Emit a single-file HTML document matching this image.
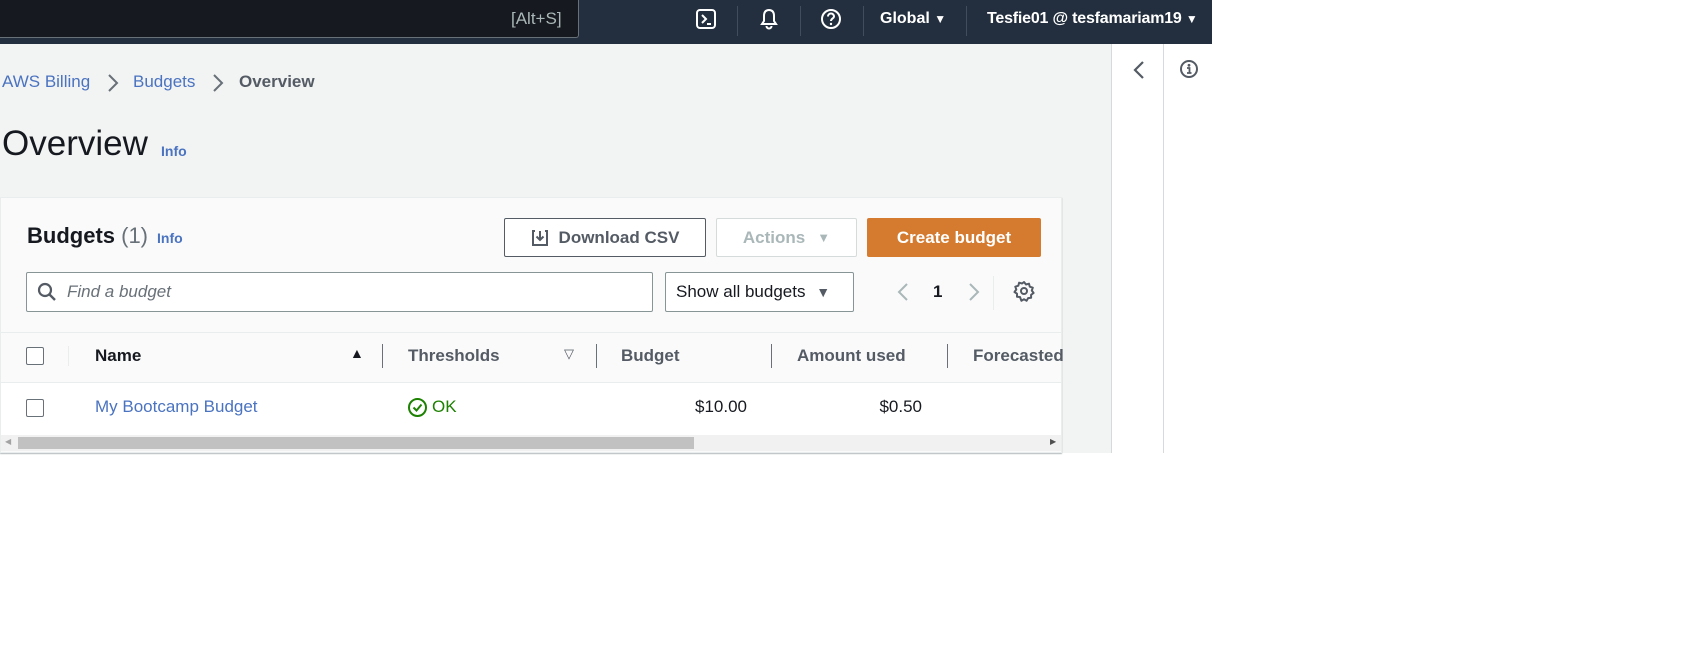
<!DOCTYPE html>
<html><head><meta charset="utf-8"><style>
*{box-sizing:border-box;margin:0;padding:0}
body{width:1704px;height:648px;background:#fff;font-family:"Liberation Sans",sans-serif;position:relative;overflow:hidden;color:#16191f}
.a{position:absolute;white-space:nowrap}
.bar{left:0;top:0;width:1212px;height:44px;background:#232f3e}
.srch{left:0;top:0;width:579px;height:38px;background:#16191f;border:1px solid #687078;border-left:none;border-top:none;border-radius:0 0 3px 0}
.main{left:0;top:44px;width:1112px;height:409px;background:#f2f3f3}
.vl{width:1px;background:#d5dbdb}
.lnk{color:#4a73c0}
.card{left:0;top:197px;width:1062px;height:256px;background:#fafafa;border:1px solid #eaeded;box-shadow:0 1px 1px rgba(0,28,36,.3)}
.btn{height:39px;border:1px solid #545b64;border-radius:2px;font-weight:bold;font-size:17px;display:flex;align-items:center;justify-content:center;background:#fff;color:#545b64}
.cb{width:18px;height:18px;border:1.5px solid #687078;border-radius:2px;background:#fff}
.th{font-weight:bold;font-size:17px;color:#545b64}
.sep{width:1px;height:24px;background:#687078}
</style></head><body>
<div class="a bar"></div>
<div class="a srch"></div>
<div class="a" style="left:511px;top:9px;font-size:17px;color:#aab7b8">[Alt+S]</div>
<svg class="a" style="left:695px;top:8px" width="22" height="22" viewBox="0 0 22 22"><rect x="2" y="2" width="18" height="18" rx="3" fill="none" stroke="#fff" stroke-width="2"/><path d="M7 7l4 4-4 4M12 16h4" fill="none" stroke="#fff" stroke-width="2"/></svg>
<div class="a" style="left:737px;top:6px;width:1px;height:30px;background:#414d5c"></div>
<svg class="a" style="left:758px;top:7px" width="22" height="24" viewBox="0 0 22 24"><path d="M11 3c-4 0-5 3-5 6v5l-2 3h14l-2-3V9c0-3-1-6-5-6zM8.5 19a2.5 2.5 0 005 0" fill="none" stroke="#fff" stroke-width="2"/></svg>
<div class="a" style="left:800px;top:6px;width:1px;height:30px;background:#414d5c"></div>
<svg class="a" style="left:820px;top:8px" width="22" height="22" viewBox="0 0 22 22"><circle cx="11" cy="11" r="9" fill="none" stroke="#fff" stroke-width="2"/><path d="M8 8.5a3 3 0 116 0c0 2-3 2-3 4.5" fill="none" stroke="#fff" stroke-width="2"/><circle cx="11" cy="16" r="1.2" fill="#fff"/></svg>
<div class="a" style="left:863px;top:6px;width:1px;height:30px;background:#414d5c"></div>
<div class="a" style="left:880px;top:10px;font-size:16px;font-weight:bold;color:#fff">Global <span style="font-size:12px">▼</span></div>
<div class="a" style="left:966px;top:6px;width:1px;height:30px;background:#414d5c"></div>
<div class="a" style="left:987px;top:10px;font-size:16px;font-weight:bold;color:#fff;letter-spacing:-0.2px">Tesfie01 @ tesfamariam19 <span style="font-size:12px">▼</span></div>

<div class="a main"></div>
<div class="a vl" style="left:1111px;top:44px;height:409px"></div>
<div class="a vl" style="left:1163px;top:44px;height:409px"></div>
<svg class="a" style="left:1131px;top:59px" width="16" height="22" viewBox="0 0 16 22"><path d="M12 3L4 11l8 8" fill="none" stroke="#545b64" stroke-width="2.2"/></svg>
<svg class="a" style="left:1179px;top:59px" width="20" height="20" viewBox="0 0 20 20"><circle cx="10" cy="10" r="8" fill="none" stroke="#545b64" stroke-width="2"/><circle cx="10" cy="6.3" r="1.4" fill="#545b64"/><path d="M8 9h2.5v5M8 14h4.5" fill="none" stroke="#545b64" stroke-width="1.8"/></svg>

<div class="a lnk" style="left:2px;top:72px;font-size:17px">AWS Billing</div>
<svg class="a" style="left:106px;top:73px" width="14" height="20" viewBox="0 0 14 20"><path d="M3 2l8 8-8 8" fill="none" stroke="#687078" stroke-width="2"/></svg>
<div class="a lnk" style="left:133px;top:72px;font-size:17px">Budgets</div>
<svg class="a" style="left:211px;top:73px" width="14" height="20" viewBox="0 0 14 20"><path d="M3 2l8 8-8 8" fill="none" stroke="#687078" stroke-width="2"/></svg>
<div class="a" style="left:239px;top:72px;font-size:17px;font-weight:bold;color:#545b64">Overview</div>
<div class="a" style="left:2px;top:124px;font-size:35px;color:#16191f">Overview</div>
<div class="a lnk" style="left:161px;top:143px;font-size:14px;font-weight:bold">Info</div>

<div class="a card"></div>
<div class="a" style="left:1px;top:382px;width:1060px;height:53px;background:#fff;border-top:1px solid #eaeded"></div>
<div class="a" style="left:1px;top:332px;width:1060px;height:1px;background:#eaeded"></div>
<div class="a" style="left:27px;top:223px;font-size:22px;font-weight:bold">Budgets <span style="font-weight:normal;color:#687078">(1)</span></div>
<div class="a lnk" style="left:157px;top:230px;font-size:14px;font-weight:bold">Info</div>
<div class="a btn" style="left:504px;top:218px;width:202px"><svg width="18" height="18" viewBox="0 0 18 18" style="margin-right:10px"><path d="M4 2H2v14h14V2h-2M9 2v9M5.5 7.5L9 11l3.5-3.5" fill="none" stroke="#545b64" stroke-width="2"/></svg>Download CSV</div>
<div class="a btn" style="left:716px;top:218px;width:141px;border-color:#d5dbdb;color:#aab7b8">Actions<span style="font-size:13px;margin-left:12px">▼</span></div>
<div class="a btn" style="left:867px;top:218px;width:174px;background:#d47b30;border-color:#d47b30;color:#fff">Create budget</div>
<div class="a" style="left:26px;top:272px;width:627px;height:40px;border:1px solid #879596;border-radius:2px;background:#fff"></div>
<svg class="a" style="left:37px;top:282px" width="20" height="20" viewBox="0 0 20 20"><circle cx="8" cy="8" r="6" fill="none" stroke="#545b64" stroke-width="2.2"/><path d="M12.5 12.5L18 18" stroke="#545b64" stroke-width="2.4"/></svg>
<div class="a" style="left:67px;top:282px;font-size:17px;font-style:italic;color:#687078">Find a budget</div>
<div class="a" style="left:665px;top:272px;width:189px;height:40px;border:1px solid #879596;border-radius:2px;background:#fff;font-size:17px;padding:9px 0 0 10px">Show all budgets <span style="font-size:14px;color:#545b64;margin-left:6px">▼</span></div>
<svg class="a" style="left:895px;top:281px" width="16" height="22" viewBox="0 0 16 22"><path d="M12 3L4 11l8 8" fill="none" stroke="#aab7b8" stroke-width="2"/></svg>
<div class="a" style="left:933px;top:282px;font-size:17px;font-weight:bold">1</div>
<svg class="a" style="left:966px;top:281px" width="16" height="22" viewBox="0 0 16 22"><path d="M4 3l8 8-8 8" fill="none" stroke="#aab7b8" stroke-width="2"/></svg>
<div class="a" style="left:993px;top:276px;width:1px;height:34px;background:#eaeded"></div>
<svg class="a" style="left:1013px;top:280px" width="22" height="22" viewBox="0 0 22 22"><path d="M11 2l2 2.5 3-.8.8 3 3 1-1 2.8 1.8 2.5-2.5 1.8v3l-3 .3-1.5 2.7-2.6-1.5-2.6 1.5L7 17l-3-.3v-3L1.5 12 3.3 9.5 2.3 6.7l3-1 .8-3 3 .8z" fill="none" stroke="#545b64" stroke-width="2" stroke-linejoin="round"/><circle cx="11" cy="11" r="3" fill="none" stroke="#545b64" stroke-width="2"/></svg>

<div class="a cb" style="left:26px;top:347px"></div>
<div class="a" style="left:68px;top:346px;width:1px;height:20px;background:#eaeded"></div>
<div class="a th" style="left:95px;top:346px;color:#16191f">Name</div>
<div class="a" style="left:350px;top:345px;font-size:14px">▲</div>
<div class="a sep" style="left:382px;top:344px"></div>
<div class="a th" style="left:408px;top:346px">Thresholds</div>
<div class="a" style="left:564px;top:346px;font-size:13px;color:#545b64">▽</div>
<div class="a sep" style="left:596px;top:344px"></div>
<div class="a th" style="left:621px;top:346px">Budget</div>
<div class="a sep" style="left:771px;top:344px"></div>
<div class="a th" style="left:797px;top:346px">Amount used</div>
<div class="a sep" style="left:947px;top:344px"></div>
<div class="a th" style="left:973px;top:346px">Forecasted</div>

<div class="a cb" style="left:26px;top:399px"></div>
<div class="a lnk" style="left:95px;top:397px;font-size:17px">My Bootcamp Budget</div>
<svg class="a" style="left:407px;top:397px" width="21" height="21" viewBox="0 0 21 21"><circle cx="10.5" cy="10.5" r="8.5" fill="none" stroke="#1d8102" stroke-width="2"/><path d="M6.5 10.5l3 3 5-6" fill="none" stroke="#1d8102" stroke-width="2"/></svg>
<div class="a" style="left:432px;top:397px;font-size:17px;color:#1d8102">OK</div>
<div class="a" style="left:647px;top:397px;width:100px;text-align:right;font-size:17px">$10.00</div>
<div class="a" style="left:822px;top:397px;width:100px;text-align:right;font-size:17px">$0.50</div>

<div class="a" style="left:1px;top:435px;width:1060px;height:16px;background:#f1f1f1"></div>
<div class="a" style="left:18px;top:437px;width:676px;height:12px;background:#c1c1c1"></div>
<div class="a" style="left:5px;top:437px;font-size:8px;color:#a3a3a3">◀</div>
<div class="a" style="left:1050px;top:437px;font-size:8px;color:#505050">▶</div>
</body></html>
